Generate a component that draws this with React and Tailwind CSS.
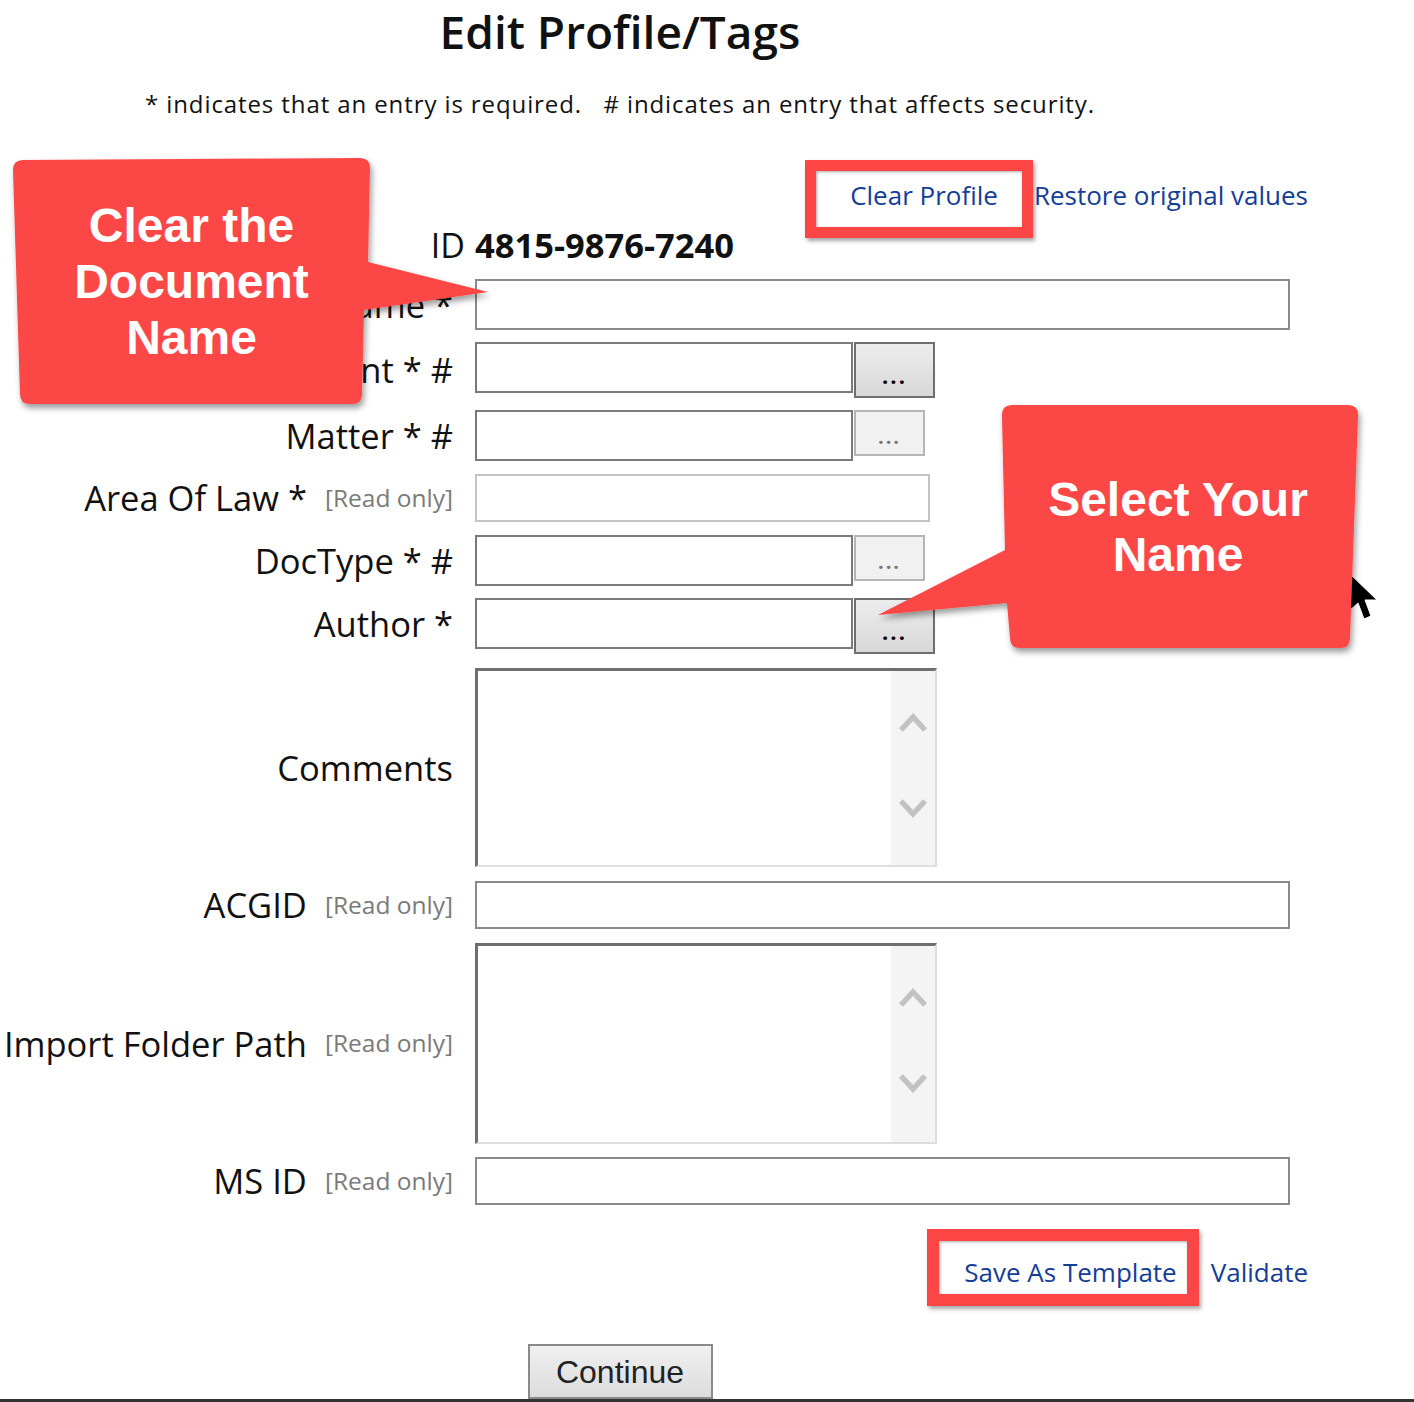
import React from "react";

const Label = ({ text, readOnly, h }) => (
  <div
    className={`w-[475px] shrink-0 pr-[22px] flex items-center justify-end gap-[18px] whitespace-nowrap ${h}`}
  >
    <span className="text-[34.5px] text-[#111]">{text}</span>
    {readOnly && <span className="text-[24.5px] text-[#7a7a7a]">[Read only]</span>}
  </div>
);

const DotsButton = ({ dark }) =>
  dark ? (
    <button className="ml-px w-[81px] h-[56px] border-2 border-[#6e6e6e] bg-gradient-to-b from-[#ededed] to-[#d8d8d8] text-[22px] leading-none tracking-[2px] font-bold text-black pt-[10px]">
      ...
    </button>
  ) : (
    <button className="ml-px w-[71px] h-[46px] border-2 border-[#b5b5b5] bg-[#f1f1f1] text-[20px] leading-none tracking-[2px] font-bold text-[#777] pt-[8px]">
      ...
    </button>
  );

const Chevron = ({ up }) => (
  <svg width="30" height="22" viewBox="0 0 30 22">
    <polyline
      points={up ? "3,19 15,6 27,19" : "3,4 15,17 27,4"}
      fill="none"
      stroke="#c2c2c2"
      strokeWidth="5.5"
    />
  </svg>
);

const TextArea = ({ h }) => (
  <div
    className={`w-[462px] ${h} flex border-t-[3px] border-l-[3px] border-t-[#6f6f6f] border-l-[#6f6f6f] border-r-2 border-b-2 border-r-[#dedede] border-b-[#dedede]`}
  >
    <div className="flex-1 bg-white" />
    <div className="w-[44px] bg-[#f4f4f4] flex flex-col items-center pt-[40px] gap-[64px]">
      <Chevron up />
      <Chevron />
    </div>
  </div>
);

export default function App() {
  return (
    <div className="relative w-[1414px] h-[1402px] overflow-hidden bg-white font-['Open_Sans',sans-serif] text-[#111]">
      {/* header */}
      <div className="w-[1240px]">
        <h1 className="h-[62px] leading-[62px] text-center text-[46px] font-semibold text-[#111]">
          Edit Profile/Tags
        </h1>
        <p className="mt-[24px] h-[36px] leading-[36px] text-center text-[24px] tracking-[0.9px] whitespace-pre">
          {"* indicates that an entry is required.   # indicates an entry that affects security."}
        </p>
      </div>

      <div className="mt-[53px] h-[40px] flex items-center justify-end gap-[36px] pr-[106px] text-[26px] text-[#153d97]">
        <a className="cursor-pointer">Clear Profile</a>
        <a className="cursor-pointer">Restore original values</a>
      </div>

      {/* ID */}
      <div className="mt-[10px] h-[40px] flex items-center">
        <div className="w-[475px] pr-[10px] text-right text-[34px]">ID</div>
        <div className="text-[34.5px] font-bold">4815-9876-7240</div>
      </div>

      {/* form rows */}
      <div className="flex flex-col">
        <div className="mt-[14px] flex items-start">
          <Label text="Document Name *" h="h-[51px]" />
          <input className="w-[815px] h-[51px] border-2 border-[#8a8a8a] outline-none" />
        </div>
        <div className="mt-[12px] flex items-start">
          <Label text="Client * #" h="h-[56px]" />
          <input className="w-[378px] h-[51px] border-2 border-[#7a7a7a] outline-none" />
          <DotsButton dark />
        </div>
        <div className="mt-[12px] flex items-start">
          <Label text="Matter * #" h="h-[51px]" />
          <input className="w-[378px] h-[51px] border-2 border-[#7a7a7a] outline-none" />
          <DotsButton />
        </div>
        <div className="mt-[13px] flex items-start">
          <Label text="Area Of Law *" readOnly h="h-[48px]" />
          <input readOnly className="w-[455px] h-[48px] border-2 border-[#c4c4c4] outline-none" />
        </div>
        <div className="mt-[13px] flex items-start">
          <Label text="DocType * #" h="h-[51px]" />
          <input className="w-[378px] h-[51px] border-2 border-[#7a7a7a] outline-none" />
          <DotsButton />
        </div>
        <div className="mt-[12px] flex items-start">
          <Label text="Author *" h="h-[51px]" />
          <input className="w-[378px] h-[51px] border-2 border-[#7a7a7a] outline-none" />
          <DotsButton dark />
        </div>
        <div className="mt-[14px] flex items-start">
          <Label text="Comments" h="h-[199px]" />
          <TextArea h="h-[199px]" />
        </div>
        <div className="mt-[14px] flex items-start">
          <Label text="ACGID" readOnly h="h-[48px]" />
          <input readOnly className="w-[815px] h-[48px] border-2 border-[#8a8a8a] outline-none" />
        </div>
        <div className="mt-[14px] flex items-start">
          <Label text="Import Folder Path" readOnly h="h-[201px]" />
          <TextArea h="h-[201px]" />
        </div>
        <div className="mt-[13px] flex items-start">
          <Label text="MS ID" readOnly h="h-[48px]" />
          <input readOnly className="w-[815px] h-[48px] border-2 border-[#8a8a8a] outline-none" />
        </div>
      </div>

      <div className="mt-[47px] h-[40px] flex items-center justify-end gap-[34px] pr-[106px] text-[26px] text-[#153d97]">
        <a className="cursor-pointer">Save As Template</a>
        <a className="cursor-pointer">Validate</a>
      </div>

      <div className="mt-[52px] w-[1240px] flex justify-center">
        <button className="w-[185px] h-[55px] border-2 border-[#8a8a8a] bg-gradient-to-b from-[#f0f0f0] to-[#dcdcdc] text-[32px] leading-none font-['Liberation_Sans',Arial,sans-serif] text-[#222]">
          Continue
        </button>
      </div>
      <div className="h-[4px] bg-[#333]" />

      {/* annotation: red highlight boxes */}
      <div className="absolute left-[805px] top-[160px] w-[228px] h-[78px] border-[11px] border-[#fc4646] shadow-[2px_3px_4px_rgba(0,0,0,0.35),inset_1px_1px_3px_rgba(0,0,0,0.35)]" />
      <div className="absolute left-[927px] top-[1229px] w-[272px] h-[77px] border-[12px] border-[#fc4646] shadow-[2px_3px_4px_rgba(0,0,0,0.35),inset_1px_1px_3px_rgba(0,0,0,0.35)]" />

      {/* annotation: callouts */}
      <svg className="absolute left-0 top-0 pointer-events-none" width="1414" height="1402">
        <defs>
          <filter id="sh" x="-10%" y="-10%" width="130%" height="130%">
            <feDropShadow dx="2" dy="4" stdDeviation="3" floodColor="#000" floodOpacity="0.4" />
          </filter>
        </defs>
        <path
          d="M1349 573 L1349 611 L1358 603 L1364 619 L1371 616 L1365 600 L1377 600 Z"
          fill="#000"
          stroke="#fff"
          strokeWidth="1"
        />
        <path
          d="M23 160 L360 158 Q370 158 370 168 L368 262 L488 292 L364 310 L362 394 Q362 404 352 404 L30 404 Q20 404 20 394 L13 170 Q13 160 23 160 Z"
          fill="#fc4646"
          filter="url(#sh)"
        />
        <path
          d="M1012 405 L1348 405 Q1358 405 1358 415 L1350 638 Q1350 648 1340 648 L1020 648 Q1010 648 1010 638 L1007 603 L878 615 L1005 550 L1002 415 Q1002 405 1012 405 Z"
          fill="#fc4646"
          filter="url(#sh)"
        />
      </svg>
      <div className="absolute left-[13px] top-[160px] w-[357px] h-[244px] flex items-center justify-center text-center text-white font-bold text-[48px] leading-[56px] font-['Liberation_Sans',Arial,sans-serif] pointer-events-none">
        Clear the
        <br />
        Document
        <br />
        Name
      </div>
      <div className="absolute left-[1002px] top-[405px] w-[352px] h-[243px] flex items-center justify-center text-center text-white font-bold text-[48px] leading-[55px] font-['Liberation_Sans',Arial,sans-serif] pointer-events-none">
        Select Your
        <br />
        Name
      </div>
    </div>
  );
}
